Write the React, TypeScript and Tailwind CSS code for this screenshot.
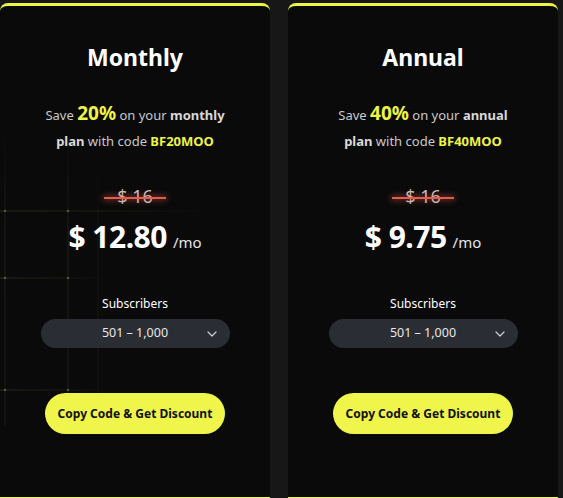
import React from 'react';
import { ChevronDown } from 'lucide-react';

interface Plan {
  name: string;
  pct: string;
  period: string;
  code: string;
  price: string;
}

const plans: Plan[] = [
  { name: 'Monthly', pct: '20%', period: 'monthly', code: 'BF20MOO', price: '12.80' },
  { name: 'Annual', pct: '40%', period: 'annual', code: 'BF40MOO', price: '9.75' },
];

const GridDecor = () => (
  <svg className="pointer-events-none absolute left-0 top-0" width="230" height="420" viewBox="0 0 230 420">
    <defs>
      <linearGradient id="fadeX" x1="0" x2="1" y1="0" y2="0">
        <stop offset="0" stopColor="#2e2e1e" stopOpacity="0.9" />
        <stop offset="1" stopColor="#2e2e1e" stopOpacity="0" />
      </linearGradient>
      <linearGradient id="fadeY" x1="0" x2="0" y1="0" y2="1">
        <stop offset="0" stopColor="#1f1f16" stopOpacity="0" />
        <stop offset="0.35" stopColor="#1f1f16" stopOpacity="1" />
        <stop offset="1" stopColor="#1f1f16" stopOpacity="0.8" />
      </linearGradient>
    </defs>
    <rect x="4.5" y="120" width="1" height="300" fill="url(#fadeY)" />
    <rect x="67.5" y="120" width="1" height="300" fill="url(#fadeY)" />
    <rect x="97.5" y="150" width="1" height="270" fill="url(#fadeY)" opacity="0.6" />
    <rect x="0" y="204.5" width="215" height="1" fill="url(#fadeX)" />
    <rect x="0" y="271.5" width="110" height="1" fill="url(#fadeX)" />
    <rect x="0" y="383.5" width="110" height="1" fill="url(#fadeX)" />
    {[205, 272, 384].map((y) =>
      [5, 68].map((x) => <circle key={`${x}-${y}`} cx={x} cy={y} r="1.3" fill="#5a552f" />)
    )}
  </svg>
);

const PlanCard = ({ plan, decor }: { plan: Plan; decor?: boolean }) => (
  <div className="relative flex w-[270px] shrink-0 flex-col items-center overflow-hidden rounded-t-lg border-t-[3px] border-b border-[#eef542] bg-[#0a0a0a] pt-[35px] pb-[60px]">
    {decor && <GridDecor />}
    <h2 className="relative text-[23px] leading-8 font-bold text-white">{plan.name}</h2>
    <p className="relative mt-[27px] w-[200px] text-center text-[13px] leading-[26px] text-[#c9c9c9]">
      Save <span className="text-[19px] font-bold text-[#eef542]">{plan.pct}</span> on your{' '}
      <span className="font-bold text-[#d9d9d9]">{plan.period}</span>{' '}
      <span className="font-bold text-[#d9d9d9]">plan</span> with code{' '}
      <span className="font-bold text-[#eef542]">{plan.code}</span>
    </p>
    <div className="relative mt-[30px] px-[13px] text-lg leading-6 text-[#c4c4c4]">
      $ 16
      <span className="absolute top-[13px] right-0 left-0 h-[2px] bg-[#e85a4c] shadow-[0_0_6px_1px_rgba(232,90,76,0.55)]" />
    </div>
    <div className="relative mt-[9px] flex items-baseline text-white">
      <span className="text-[30px] leading-10 font-bold tracking-[-0.5px]">$ {plan.price}</span>
      <span className="ml-[6px] text-[15px] text-[#e6e6e6]">/mo</span>
    </div>
    <div className="relative mt-[37px] text-[12px] leading-5 text-white">Subscribers</div>
    <div className="relative mt-[5px] flex h-[29px] w-[189px] items-center justify-center rounded-full bg-[#2a2d33] text-[12.5px] text-[#e8e8e8]">
      501 – 1,000
      <ChevronDown className="absolute right-[10px] h-4 w-4 text-[#cfcfcf]" strokeWidth={1.8} />
    </div>
    <button className="relative mt-[45px] h-[41px] w-[180px] rounded-full bg-[#eff54a] text-[12px] font-bold text-[#111]">
      Copy Code &amp; Get Discount
    </button>
  </div>
);

export default function App() {
  return (
    <div
      className="flex h-[498px] w-[563px] gap-[18px] overflow-hidden bg-[#171717] pt-[3px]"
      style={{ fontFamily: '"Noto Sans", "Open Sans", sans-serif' }}
    >
      {plans.map((p, i) => (
        <PlanCard key={p.name} plan={p} decor={i === 0} />
      ))}
    </div>
  );
}
